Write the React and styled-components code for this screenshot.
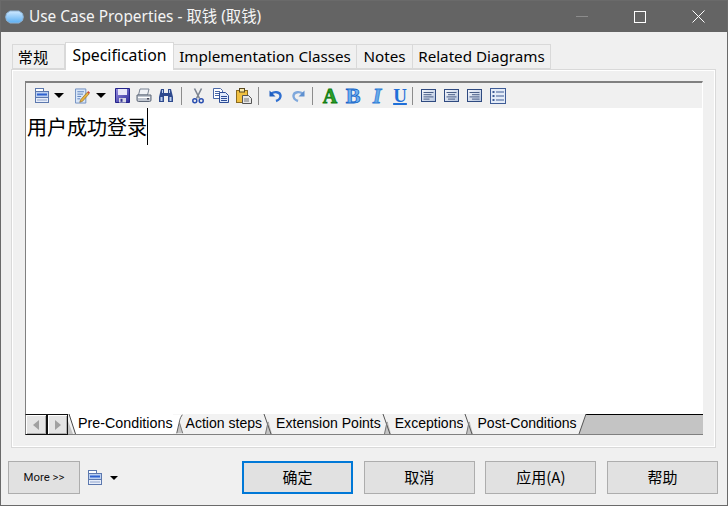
import { Fragment } from "react";
import { createGlobalStyle, styled } from "styled-components";

const Global = createGlobalStyle`
  html, body { margin: 0; padding: 0; background: #f0f0f0; }
  * { box-sizing: border-box; }
`;

const uiFont = `"Noto Sans", "Open Sans", "Noto Sans CJK SC", sans-serif`;
const cjkFont = `"Noto Sans CJK SC", "Liberation Sans", sans-serif`;

const Win = styled.div`
  width: 728px;
  height: 506px;
  display: flex;
  flex-direction: column;
  background: #f0f0f0;
  border: 1px solid #6a6a6a;
  overflow: hidden;
`;

const TitleBar = styled.div`
  height: 31px;
  flex: none;
  display: flex;
  align-items: center;
  padding-left: 4px;
  background: #646464;
  color: #fff;
  font: 15.4px ${uiFont};
`;

const TitleText = styled.span`
  margin-left: 5px;
  margin-top: -2px;
  color: #f4f4f4;
  white-space: nowrap;
`;

const WinButtons = styled.div`
  margin-left: auto;
  display: flex;
`;

const WinButton = styled.div`
  width: 58px;
  height: 31px;
  display: flex;
  align-items: center;
  justify-content: center;
`;

const Body = styled.div`
  flex: 1;
  display: flex;
  flex-direction: column;
  padding-top: 10px;
  min-height: 0;
`;

const TabStrip = styled.div`
  height: 27px;
  flex: none;
  display: flex;
  align-items: flex-end;
  padding-left: 11px;
  position: relative;
  z-index: 1;
`;

const Tab = styled.div`
  width: ${(p) => p.$w}px;
  height: ${(p) => (p.$active ? 28 : 25)}px;
  margin-bottom: ${(p) => (p.$active ? -1 : 0)}px;
  display: flex;
  align-items: center;
  justify-content: center;
  background: ${(p) => (p.$active ? "#fff" : "#f0f0f0")};
  border: 1px solid #d9d9d9;
  border-bottom: ${(p) => (p.$active ? "none" : "1px solid #d9d9d9")};
  border-left: ${(p) => (p.$active || p.$first ? "1px solid #d9d9d9" : "none")};
  color: #000;
  font: ${(p) => (p.$active ? 15.8 : 15.2)}px ${uiFont};
  white-space: nowrap;
  padding-bottom: ${(p) => (p.$active ? 4 : 1)}px;
  padding-right: ${(p) => (p.$first ? 11 : 0)}px;
`;

const Panel = styled.div`
  flex: 1;
  min-height: 0;
  margin: 0 11px 0 10px;
  padding: 11px 12px 12px 13px;
  border: 1px solid #d9d9d9;
  box-shadow: inset 0 0 0 1px #fff;
  display: flex;
  flex-direction: column;
`;

const Editor = styled.div`
  flex: 1;
  min-height: 0;
  display: flex;
  flex-direction: column;
  border-top: 2px solid #808080;
  border-left: 1px solid #808080;
  border-right: 1px solid #fff;
  background: #fff;
`;

const Toolbar = styled.div`
  height: 25px;
  flex: none;
  display: flex;
  align-items: center;
  padding-left: 8px;
  background: #f0f0f0;
`;

const ToolGroup = styled.div`
  display: flex;
  align-items: center;
  gap: ${(p) => p.$gap ?? 7}px;
  margin-left: ${(p) => p.$ml || 0}px;
`;

const Tool = styled.div`
  width: 16px;
  height: 16px;
  flex: none;
  display: flex;
  align-items: center;
  justify-content: center;
  margin-left: ${(p) => p.$ml || 0}px;
`;

const ToolSep = styled.div`
  width: 1px;
  height: 18px;
  flex: none;
  margin: 0 ${(p) => p.$mr}px 0 ${(p) => p.$ml}px;
  background: #8c8c8c;
`;

const Caret = styled.div`
  width: 0;
  height: 0;
  margin-left: ${(p) => p.$ml ?? 4}px;
  border-left: ${(p) => p.$size ?? 5}px solid transparent;
  border-right: ${(p) => p.$size ?? 5}px solid transparent;
  border-top: ${(p) => p.$size ?? 5}px solid #000;
`;

const Glyph = styled.span`
  font-family: "Liberation Serif", serif;
  font-size: ${(p) => p.$size}px;
  font-weight: 700;
  font-style: ${(p) => (p.$italic ? "italic" : "normal")};
  line-height: 16px;
  color: ${(p) => p.$fill};
  -webkit-text-stroke: ${(p) => (p.$stroke ? `0.8px ${p.$stroke}` : "0")};
  text-decoration: ${(p) => (p.$under ? "underline" : "none")};
  text-decoration-thickness: 2px;
  text-underline-offset: 1px;
`;

const TextArea = styled.div`
  flex: 1;
  min-height: 0;
  padding-left: 1px;
  background: #fff;
`;

const TextLine = styled.div`
  display: flex;
  align-items: flex-start;
  height: 37px;
  font: 20px/37px ${cjkFont};
  color: #000;
`;

const Cursor = styled.span`
  width: 1px;
  height: 37px;
  background: #000;
`;

const SheetBar = styled.div`
  height: 21px;
  flex: none;
  display: flex;
  background: #f4f4f4;
  border-bottom: 1px solid #808080;
  margin: 0 -1px 0 -1px;
`;

const ScrollBtn = styled.div`
  width: ${(p) => (p.$first ? 22 : 21)}px;
  height: 21px;
  margin-bottom: -1px;
  flex: none;
  display: flex;
  align-items: center;
  justify-content: center;
  background: #e4e4e4;
  border: 1px solid #111;
  border-left-color: ${(p) => (p.$first ? "#808080" : "#111")};
  box-shadow: inset 1px 1px 0 #fff, inset -1px -1px 0 #b0b0b0;
`;

const Arrow = styled.div`
  width: 0;
  height: 0;
  border-top: 5px solid transparent;
  border-bottom: 5px solid transparent;
  ${(p) => (p.$left ? "border-right: 6px solid #a0a0a0;" : "border-left: 6px solid #a0a0a0;")}
`;

const Sheet = styled.div`
  display: flex;
  align-items: center;
  height: 20px;
  flex: none;
  padding-bottom: 2px;
  background: ${(p) => (p.$active ? "#fff" : "#f2f2f2")};
  color: #000;
  font: ${(p) => (p.$active ? 14.3 : 14.05)}px "Liberation Sans", Arial, sans-serif;
  white-space: nowrap;
`;

const SheetRest = styled.div`
  flex: 1;
  height: 20px;
  background: #c4c4c4;
  border-top: 1px solid #000;
`;

const JointSvg = styled.svg`
  flex: none;
  display: block;
`;

const Footer = styled.div`
  height: 33px;
  flex: none;
  margin: 13px 9px 11px 7px;
  display: flex;
  align-items: center;
`;

const Button = styled.div`
  width: ${(p) => p.$w || 111}px;
  height: 33px;
  display: flex;
  align-items: center;
  justify-content: center;
  padding-bottom: 2px;
  background: #e1e1e1;
  border: ${(p) => (p.$primary ? "2px solid #0078d7" : "1px solid #adadad")};
  color: #000;
  font: 15px ${cjkFont};
`;

const MoreText = styled.span`
  font: 11.4px Roboto, "Liberation Sans", sans-serif;
  color: #111;
`;

const FooterTool = styled.div`
  display: flex;
  align-items: center;
  margin-left: 8px;
`;

const ButtonGroup = styled.div`
  margin-left: auto;
  display: flex;
  gap: 10.67px;
`;

const CaseIcon = () => (
  <svg width="19" height="14" viewBox="0 0 19 14">
    <defs>
      <linearGradient id="caseFill" x1="0" y1="0" x2="0" y2="1">
        <stop offset="0" stopColor="#cfe9ff" />
        <stop offset="1" stopColor="#5aaef2" />
      </linearGradient>
    </defs>
    <path d="M5 1h9l3.500 2.500.8 3.500-.8 3.500L14 13H5l-3.500-2.500L.7 7l.8-3.500z" fill="url(#caseFill)" stroke="#8fb4d6" />
  </svg>
);

const ListDocIcon = () => (
  <svg width="15" height="16" viewBox="0 0 15 16">
    <rect x="0.500" y="0.500" width="8" height="3" fill="#fff" stroke="#5c78ae" />
    <rect x="0.500" y="3.500" width="13" height="6" fill="#bcd0f0" stroke="#5c78ae" />
    <rect x="2" y="5.500" width="10" height="2" fill="#2f62d0" />
    <rect x="0.500" y="9.500" width="13" height="5" fill="#e8eefa" stroke="#5c78ae" />
    <path d="M2 12h10" stroke="#90a4cc" />
  </svg>
);

const NoteIcon = () => (
  <svg width="16" height="16" viewBox="0 0 17 16">
    <path d="M.5.500h11v15H.5z" fill="#d8e6f8" stroke="#6f8ec0" />
    <path d="M2.500 3.500h7M2.500 6h6M2.500 8.500h4M2.500 11h3" stroke="#5b7fbc" />
    <path d="M6 12l7-8 2 1.700-7 8-3 1z" fill="#e8b23c" stroke="#7a5a20" strokeWidth=".6" />
    <path d="M13 4l1-1.200 2 1.700-1 1.200z" fill="#d0463c" />
  </svg>
);

const SaveIcon = () => (
  <svg width="15" height="15" viewBox="0 0 15 15">
    <defs>
      <linearGradient id="saveFill" x1="0" y1="0" x2="1" y2="1">
        <stop offset="0" stopColor="#9a8fe0" />
        <stop offset="1" stopColor="#2a2a9a" />
      </linearGradient>
    </defs>
    <path d="M.5.500h14v14H.5z" fill="url(#saveFill)" stroke="#23238a" />
    <rect x="3" y="1" width="9" height="6" fill="#e8e8f8" />
    <rect x="4" y="10" width="7" height="4.500" fill="#d8d8e4" />
    <rect x="5.500" y="10.800" width="2" height="3" fill="#303090" />
  </svg>
);

const PrintIcon = () => (
  <svg width="16" height="15" viewBox="0 0 16 15">
    <path d="M4 1h9l-1.500 6H2.500z" fill="#f0f2f6" stroke="#7a8494" />
    <path d="M1 7h14v5a1.500 1.500 0 0 1-1.500 1.500h-11A1.500 1.500 0 0 1 1 12z" fill="#c0c6d0" stroke="#5f6878" />
    <path d="M2 9.500h12" stroke="#fff" />
    <rect x="11" y="10" width="2" height="1.500" fill="#445" />
  </svg>
);

const BinocularIcon = () => (
  <svg width="16" height="15" viewBox="0 0 16 15">
    <path d="M3 1h3v4h4V1h3l2 8v5h-5V8H6v6H1V9z" fill="#2e4a8e" />
    <rect x="2.500" y="9" width="2" height="4" fill="#bcd0f0" />
    <rect x="11.500" y="9" width="2" height="4" fill="#bcd0f0" />
    <rect x="4" y="2" width="1" height="3" fill="#bcd0f0" />
    <rect x="11" y="2" width="1" height="3" fill="#bcd0f0" />
  </svg>
);

const ScissorsIcon = () => (
  <svg width="12" height="16" viewBox="0 0 12 16">
    <path d="M2.500.500l5 10M9.500.500l-5 10" stroke="#7c8490" strokeWidth="1.600" fill="none" />
    <circle cx="2.800" cy="12.800" r="2" fill="none" stroke="#2a4fb0" strokeWidth="1.500" />
    <circle cx="9.200" cy="12.800" r="2" fill="none" stroke="#2a4fb0" strokeWidth="1.500" />
  </svg>
);

const CopyIcon = () => (
  <svg width="16" height="15" viewBox="0 0 16 15">
    <path d="M.5.500h7l2 2v8h-9z" fill="#fff" stroke="#4a68a8" />
    <path d="M2 3.500h5M2 5.500h5M2 7.500h5" stroke="#4a68a8" />
    <path d="M6.500 4.500h6l3 3v7h-9z" fill="#dfe9fa" stroke="#2c4c96" />
    <path d="M8 8.500h6M8 10.500h6M8 12.500h6" stroke="#2c4c96" />
  </svg>
);

const PasteIcon = () => (
  <svg width="16" height="16" viewBox="0 0 16 16">
    <rect x="0.500" y="2.500" width="11" height="12" fill="#f0c040" stroke="#8a6a20" />
    <rect x="3.500" y="0.500" width="5" height="3.500" fill="#f8e8a8" stroke="#5a4a20" />
    <path d="M6.500 7.500h6l3 3v5h-9z" fill="#e8e8e8" stroke="#555" />
    <path d="M8 11h5M8 13h5" stroke="#777" />
  </svg>
);

const UndoIcon = ({ flip }) => (
  <svg width="14" height="14" viewBox="0 0 14 14" style={flip ? { transform: "scaleX(-1)" } : undefined}>
    <path d="M2.500 4.500C5 2.500 11 2.500 11.500 6.500c.3 2.500-1.800 4.500-4.500 5.500" fill="none" stroke={flip ? "#7fa8dc" : "#2f6fd0"} strokeWidth="2.400" />
    <path d="M.5 1.500v6h6z" fill={flip ? "#5f90d0" : "#1f5fc0"} />
  </svg>
);

const AlignIcon = ({ lines }) => (
  <svg width="16" height="15" viewBox="0 0 16 15">
    <defs>
      <linearGradient id="alignFill" x1="0" y1="0" x2="1" y2="1">
        <stop offset="0" stopColor="#f6f8fc" />
        <stop offset="1" stopColor="#b4c4de" />
      </linearGradient>
    </defs>
    <rect x="0.500" y="1.500" width="14" height="12" fill="url(#alignFill)" stroke="#2f4a80" />
    {lines.map((l, i) => (
      <path key={i} d={`M${l[0]} ${4.500 + i * 2.200}h${l[1]}`} stroke="#4a5f88" />
    ))}
  </svg>
);

const BulletIcon = () => (
  <svg width="16" height="16" viewBox="0 0 16 16">
    <rect x="0.500" y="0.500" width="15" height="15" fill="#e4ecf8" stroke="#3f5c96" />
    <g fill="#3f5c96">
      <rect x="2.500" y="3" width="2" height="2" />
      <rect x="2.500" y="7" width="2" height="2" />
      <rect x="2.500" y="11" width="2" height="2" />
    </g>
    <path d="M6 4h8M6 8h8M6 12h8" stroke="#3f5c96" />
  </svg>
);

const tabFill = "#f2f2f2";
const gutter = "#c4c4c4";

// the slanted piece in front of the first sheet tab
const SheetStart = () => (
  <JointSvg width="10" height="20" viewBox="0 0 10 20">
    <rect width="10" height="20" fill="#fff" />
    <path d="M0 0L7 20H0z" fill={tabFill} />
    <path d="M0 7L5 20H0z" fill={gutter} />
    <path d="M1 0L7.500 20" stroke="#444" fill="none" />
  </JointSvg>
);

// between two sheet tabs, the active tab sits in front
const SheetJoint = ({ active }) => (
  <JointSvg width={active ? 13 : 14} height="20" viewBox="0 0 14 20">
    <rect width="14" height="20" fill={active ? "#fff" : tabFill} />
    {active ? (
      <>
        <path d="M10 0H14V20H4z" fill={tabFill} />
        <path d="M4 20L7 7l3.500 13z" fill={gutter} />
        <path d="M10 0Q8 3 7.500 5T4 20" stroke="#555" fill="none" />
        <path d="M7 9l3.500 11" stroke="#777" fill="none" />
      </>
    ) : (
      <>
        <path d="M3 20L6.500 7 10 20z" fill={gutter} />
        <path d="M2 0L9 20" stroke="#555" fill="none" />
        <path d="M6 8L3.500 20" stroke="#777" fill="none" />
      </>
    )}
  </JointSvg>
);

const SheetEnd = () => (
  <JointSvg width="10" height="20" viewBox="0 0 10 20">
    <rect width="10" height="20" fill={tabFill} />
    <path d="M9 0H10V20H2z" fill={gutter} />
    <path d="M9 0H10V1H9z" fill="#000" />
    <path d="M9 0L2 20" stroke="#555" fill="none" />
  </JointSvg>
);

const sheets = ["Pre-Conditions", "Action steps", "Extension Points", "Exceptions", "Post-Conditions"];

const App = () => {
  return (
    <Win>
      <Global />
      <TitleBar>
        <CaseIcon />
        <TitleText>Use Case Properties - 取钱 (取钱)</TitleText>
        <WinButtons>
          <WinButton>
            <svg width="12" height="12" viewBox="0 0 12 12">
              <path d="M0 5.500h12" stroke="#8c8c8c" />
            </svg>
          </WinButton>
          <WinButton>
            <svg width="12" height="12" viewBox="0 0 12 12">
              <rect x="0.500" y="0.500" width="11" height="11" fill="none" stroke="#fff" />
            </svg>
          </WinButton>
          <WinButton>
            <svg width="13" height="13" viewBox="0 0 13 13">
              <path d="M.5.500l12 12M12.500.500l-12 12" stroke="#fff" />
            </svg>
          </WinButton>
        </WinButtons>
      </TitleBar>

      <Body>
        <TabStrip>
          <Tab $w={53} $first>常规</Tab>
          <Tab $w={109} $active>Specification</Tab>
          <Tab $w={183}>Implementation Classes</Tab>
          <Tab $w={56}>Notes</Tab>
          <Tab $w={138}>Related Diagrams</Tab>
        </TabStrip>

        <Panel>
          <Editor>
            <Toolbar>
              <Tool><ListDocIcon /></Tool>
              <Caret />
              <Tool $ml={11}><NoteIcon /></Tool>
              <Caret $ml={5} />
              <ToolGroup $gap={6} $ml={8}>
                <Tool><SaveIcon /></Tool>
                <Tool><PrintIcon /></Tool>
                <Tool><BinocularIcon /></Tool>
              </ToolGroup>
              <ToolSep $ml={7} $mr={8} />
              <ToolGroup>
                <Tool><ScissorsIcon /></Tool>
                <Tool><CopyIcon /></Tool>
                <Tool><PasteIcon /></Tool>
              </ToolGroup>
              <ToolSep $ml={6} $mr={9} />
              <ToolGroup $gap={6}>
                <Tool><UndoIcon /></Tool>
                <Tool><UndoIcon flip /></Tool>
              </ToolGroup>
              <ToolSep $ml={6} $mr={9} />
              <ToolGroup>
                <Tool><Glyph $fill="#2aa02a" $stroke="#0f7a0f" $size={20}>A</Glyph></Tool>
                <Tool><Glyph $fill="#6fb0f0" $stroke="#1464c8" $size={22}>B</Glyph></Tool>
                <Tool $ml={1}><Glyph $fill="#6aaae8" $stroke="#2f7fd8" $italic $size={22}>I</Glyph></Tool>
                <Tool><Glyph $fill="#1f6fd8" $under $size={19}>U</Glyph></Tool>
              </ToolGroup>
              <ToolSep $ml={4} $mr={8} />
              <ToolGroup>
                <Tool><AlignIcon lines={[[2.500, 10], [2.500, 8], [2.500, 10], [2.500, 6]]} /></Tool>
                <Tool><AlignIcon lines={[[2.500, 10], [4, 7], [2.500, 10], [4, 7]]} /></Tool>
                <Tool><AlignIcon lines={[[2.500, 10], [5, 7.500], [2.500, 10], [5, 7.500]]} /></Tool>
                <Tool><BulletIcon /></Tool>
              </ToolGroup>
            </Toolbar>

            <TextArea>
              <TextLine>
                用户成功登录
                <Cursor />
              </TextLine>
            </TextArea>

            <SheetBar>
              <ScrollBtn $first><Arrow $left /></ScrollBtn>
              <ScrollBtn><Arrow /></ScrollBtn>
              <SheetStart />
              {sheets.map((name, i) => (
                <Fragment key={name}>
                  <Sheet $active={i === 0}>{name}</Sheet>
                  {i < sheets.length - 1 ? <SheetJoint active={i === 0} /> : <SheetEnd />}
                </Fragment>
              ))}
              <SheetRest />
            </SheetBar>
          </Editor>
        </Panel>

        <Footer>
          <Button $w={72}><MoreText>More &gt;&gt;</MoreText></Button>
          <FooterTool>
            <ListDocIcon />
            <Caret $ml={7} $size={4} />
          </FooterTool>
          <ButtonGroup>
            <Button $primary>确定</Button>
            <Button>取消</Button>
            <Button>应用(A)</Button>
            <Button>帮助</Button>
          </ButtonGroup>
        </Footer>
      </Body>
    </Win>
  );
};

export default App;
